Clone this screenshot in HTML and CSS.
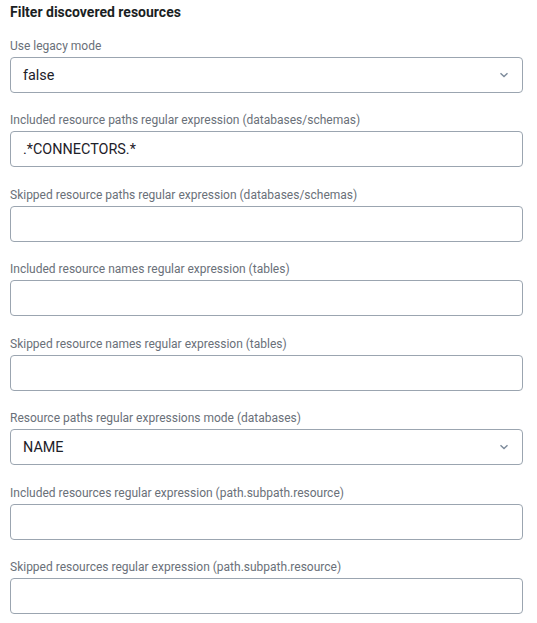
FILE: index.html
```html
<!DOCTYPE html>
<html>
<head>
<meta charset="utf-8">
<link rel="stylesheet" href="styles.css">
</head>
<body>
<div class="panel">
  <h2 class="title">Filter discovered resources</h2>
  <div class="field">
    <label class="label">Use legacy mode</label>
    <div class="box select"><span class="value">false</span>
      <svg class="chev" width="10" height="6" viewBox="0 0 10 6"><path d="M1.5 1.2 L5 4.6 L8.5 1.2" fill="none" stroke="#7d8b9b" stroke-width="1.4"/></svg>
    </div>
  </div>
  <div class="field">
    <label class="label">Included resource paths regular expression (databases/schemas)</label>
    <div class="box"><span class="value">.*CONNECTORS.*</span></div>
  </div>
  <div class="field">
    <label class="label">Skipped resource paths regular expression (databases/schemas)</label>
    <div class="box"></div>
  </div>
  <div class="field">
    <label class="label">Included resource names regular expression (tables)</label>
    <div class="box"></div>
  </div>
  <div class="field">
    <label class="label">Skipped resource names regular expression (tables)</label>
    <div class="box"></div>
  </div>
  <div class="field">
    <label class="label">Resource paths regular expressions mode (databases)</label>
    <div class="box select"><span class="value">NAME</span>
      <svg class="chev" width="10" height="6" viewBox="0 0 10 6"><path d="M1.5 1.2 L5 4.6 L8.5 1.2" fill="none" stroke="#7d8b9b" stroke-width="1.4"/></svg>
    </div>
  </div>
  <div class="field">
    <label class="label">Included resources regular expression (path.subpath.resource)</label>
    <div class="box"></div>
  </div>
  <div class="field">
    <label class="label">Skipped resources regular expression (path.subpath.resource)</label>
    <div class="box"></div>
  </div>
</div>
</body>
</html>
```
FILE: styles.css
```css
html, body {
  margin: 0;
  padding: 0;
  background: #ffffff;
}
body {
  font-family: Roboto, "Liberation Sans", sans-serif;
  color: #1d2129;
}
.panel {
  padding: 2px 14px 0 10px;
  display: flex;
  flex-direction: column;
}
.title {
  margin: 0 0 16px 0;
  font-size: 14px;
  line-height: 20px;
  font-weight: 700;
  color: #1b1f24;
}
.field {
  display: flex;
  flex-direction: column;
  margin-bottom: 19.43px;
}
.label {
  font-size: 12px;
  line-height: 16px;
  color: #6a7079;
  margin-bottom: 3px;
}
.box {
  height: 36px;
  box-sizing: border-box;
  border: 1px solid #9ba5b0;
  border-radius: 4px;
  display: flex;
  align-items: center;
  padding: 0 12px;
}
.value {
  font-size: 14.4px;
  color: #1d2129;
  flex: 1;
}
.chev {
  margin-right: 1px;
}
```
